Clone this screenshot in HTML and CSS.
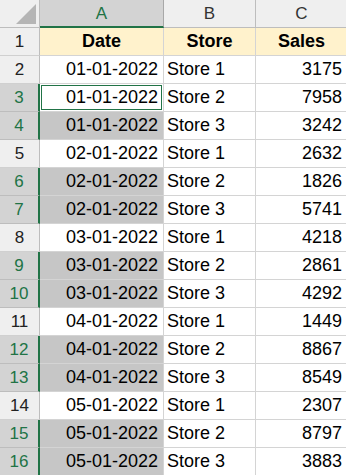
FILE: index.html
```html
<!DOCTYPE html>
<html>
<head>
<meta charset="utf-8">
<link rel="stylesheet" href="styles.css">
</head>
<body>
<div class="sheet">
  <div class="corner"><svg width="20" height="20" viewBox="0 0 20 20"><polygon points="20,0 20,20 0,20" fill="#b5b5b5"/></svg></div>
  <div class="colh sel">A</div>
  <div class="colh">B</div>
  <div class="colh">C</div>

  <div class="rowh">1</div><div class="cell head">Date</div><div class="cell head">Store</div><div class="cell head">Sales</div>
  <div class="rowh">2</div><div class="cell num">01-01-2022</div><div class="cell">Store 1</div><div class="cell num">3175</div>
  <div class="rowh sel">3</div><div class="cell num active">01-01-2022</div><div class="cell">Store 2</div><div class="cell num">7958</div>
  <div class="rowh sel">4</div><div class="cell num gray">01-01-2022</div><div class="cell">Store 3</div><div class="cell num">3242</div>
  <div class="rowh">5</div><div class="cell num">02-01-2022</div><div class="cell">Store 1</div><div class="cell num">2632</div>
  <div class="rowh sel">6</div><div class="cell num gray">02-01-2022</div><div class="cell">Store 2</div><div class="cell num">1826</div>
  <div class="rowh sel">7</div><div class="cell num gray">02-01-2022</div><div class="cell">Store 3</div><div class="cell num">5741</div>
  <div class="rowh">8</div><div class="cell num">03-01-2022</div><div class="cell">Store 1</div><div class="cell num">4218</div>
  <div class="rowh sel">9</div><div class="cell num gray">03-01-2022</div><div class="cell">Store 2</div><div class="cell num">2861</div>
  <div class="rowh sel">10</div><div class="cell num gray">03-01-2022</div><div class="cell">Store 3</div><div class="cell num">4292</div>
  <div class="rowh">11</div><div class="cell num">04-01-2022</div><div class="cell">Store 1</div><div class="cell num">1449</div>
  <div class="rowh sel">12</div><div class="cell num gray">04-01-2022</div><div class="cell">Store 2</div><div class="cell num">8867</div>
  <div class="rowh sel">13</div><div class="cell num gray">04-01-2022</div><div class="cell">Store 3</div><div class="cell num">8549</div>
  <div class="rowh">14</div><div class="cell num">05-01-2022</div><div class="cell">Store 1</div><div class="cell num">2307</div>
  <div class="rowh sel">15</div><div class="cell num gray">05-01-2022</div><div class="cell">Store 2</div><div class="cell num">8797</div>
  <div class="rowh sel">16</div><div class="cell num gray">05-01-2022</div><div class="cell">Store 3</div><div class="cell num">3883</div>
</div>
</body>
</html>
```

FILE: styles.css
```css
* { box-sizing: border-box; }
html, body { margin: 0; padding: 0; background: #fff; overflow: hidden; }
.sheet {
  display: grid;
  grid-template-columns: 40px 124px 92px 92px;
  grid-auto-rows: 28px;
  font-family: "Liberation Sans", Arial, sans-serif;
  font-size: 18px;
  color: #000;
  width: 348px;
}
.corner {
  background: #efefef;
  border-right: 1px solid #bdbdbd;
  border-bottom: 1px solid #bdbdbd;
  display: flex;
  align-items: flex-end;
  justify-content: flex-end;
  padding: 0 3px 3px 0;
}
.corner svg { display: block; }
.colh {
  background: #efefef;
  border-right: 1px solid #bdbdbd;
  border-bottom: 1px solid #bdbdbd;
  display: flex;
  align-items: center;
  justify-content: center;
  color: #333;
  font-size: 17px;
  padding-top: 1px;
}
.colh.sel {
  background: #d3d3d3;
  color: #217346;
  border-bottom: 2px solid #217346;
  border-right-color: #a8a8a8;
}
.rowh {
  background: #efefef;
  border-right: 1px solid #bdbdbd;
  border-bottom: 1px solid #d0d0d0;
  display: flex;
  align-items: center;
  justify-content: center;
  color: #222;
  font-size: 17px;
}
.rowh.sel {
  background: #d3d3d3;
  color: #217346;
  border-right: 2px solid #217346;
  border-bottom-color: #bdbdbd;
}
.cell {
  border-right: 1px solid #d4d4d4;
  border-bottom: 1px solid #d4d4d4;
  display: flex;
  align-items: center;
  padding: 0 3px;
  white-space: nowrap;
  overflow: hidden;
}
.cell.num { justify-content: flex-end; padding-right: 5px; }
.cell.head {
  background: #fff2cc;
  font-weight: bold;
  justify-content: center;
}
.cell.gray { background: #c6c6c6; }
.cell.active {
  box-shadow: inset 0 0 0 1px #fff, inset 0 0 0 2px #217346;
}
```
